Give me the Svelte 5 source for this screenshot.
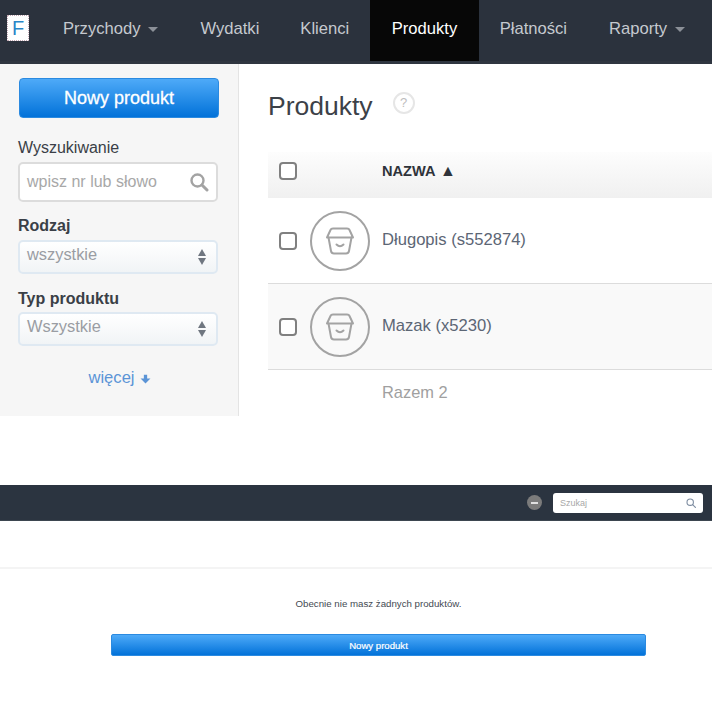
<script>
  const menu = [
    { label: 'Przychody', caret: true },
    { label: 'Wydatki' },
    { label: 'Klienci' },
    { label: 'Produkty', active: true },
    { label: 'Płatności' },
    { label: 'Raporty', caret: true }
  ];

  const products = [
    { name: 'Długopis (s552874)' },
    { name: 'Mazak (x5230)', shaded: true }
  ];
</script>

{#snippet bag()}
  <span class="thumb">
    <svg width="30" height="30" viewBox="0 0 30 30" fill="none" stroke="#a3a3a3" stroke-width="2" stroke-linejoin="round" stroke-linecap="round">
      <path d="M2 11.5 L5.5 4 Q6 2.5 8 2.5 H22 Q24 2.5 24.5 4 L28 11.5 Z" />
      <path d="M3.5 11.5 L6 25 Q6.5 27.5 9 27.5 H21 Q23.500 27.5 24 25 L26.5 11.5" />
      <path d="M11.5 18.5 Q15 22 18.5 18.5" />
    </svg>
  </span>
{/snippet}

{#snippet updown()}
  <span class="updown"><i class="up"></i><i class="down"></i></span>
{/snippet}

<div class="page">
  <section class="app">
    <nav class="topnav">
      <div class="logo"><span>F</span></div>
      <ul>
        {#each menu as item}
          <li class:active={item.active}>
            {item.label}
            {#if item.caret}<i class="caret"></i>{/if}
          </li>
        {/each}
      </ul>
    </nav>

    <div class="body">
      <aside class="sidebar">
        <button class="btn-new">Nowy produkt</button>

        <div class="label first">Wyszukiwanie</div>
        <div class="search">
          <span>wpisz nr lub słowo</span>
          <svg width="20" height="20" viewBox="0 0 20 20" fill="none" stroke="#a3a3a3">
            <circle cx="8.5" cy="8.5" r="6" stroke-width="2.4" />
            <path d="M13 13 L18 18" stroke-width="3" stroke-linecap="round" />
          </svg>
        </div>

        <div class="label strong">Rodzaj</div>
        <div class="select"><span>wszystkie</span>{@render updown()}</div>

        <div class="label strong second">Typ produktu</div>
        <div class="select"><span>Wszystkie</span>{@render updown()}</div>

        <a class="more" href="#more">więcej
          <svg width="11" height="11" viewBox="0 0 10 10" fill="#5b94d6"><path d="M3.5 1.5 H6.5 V5 H9.5 L5 9.5 L0.5 5 H3.5 Z" /></svg>
        </a>
      </aside>

      <main class="content">
        <div class="title">
          <h1>Produkty</h1>
          <span class="help">?</span>
        </div>

        <div class="row head">
          <span class="check"></span>
          <span class="name-head">NAZWA <b>▲</b></span>
        </div>
        {#each products as p}
          <div class="row item" class:shaded={p.shaded}>
            <span class="check"></span>
            {@render bag()}
            <span class="name">{p.name}</span>
          </div>
        {/each}
        <div class="total">Razem 2</div>
      </main>
    </div>
  </section>

  <section class="mobile">
    <header class="bar">
      <span class="dot"><i></i></span>
      <div class="mini-search">
        <span>Szukaj</span>
        <svg width="10" height="10" viewBox="0 0 10 10" fill="none" stroke="#7d8ca0" stroke-width="1.1">
          <circle cx="4.2" cy="4.2" r="3.2" />
          <path d="M6.6 6.6 L9.4 9.4" stroke-linecap="round" />
        </svg>
      </div>
    </header>
    <div class="strip"></div>
    <p class="empty">Obecnie nie masz żadnych produktów.</p>
    <button class="btn-wide">Nowy produkt</button>
  </section>
</div>

<style>
  :global(body) {
    margin: 0;
    background: #fff;
  }

  .page {
    width: 712px;
    height: 712px;
    overflow: hidden;
    font-family: "Liberation Sans", Arial, sans-serif;
    color: #333;
  }

  .app {
    height: 416px;
    display: flex;
    flex-direction: column;
    overflow: hidden;
  }

  .topnav {
    height: 64px;
    flex: none;
    box-sizing: border-box;
    background: #2b323d;
    border-bottom: 3px solid #2f3640;
    display: flex;
  }

  .logo {
    width: 41px;
    margin-left: 7px;
    flex: none;
    padding-top: 15px;
    box-sizing: border-box;
  }

  .logo span {
    display: block;
    width: 22px;
    height: 26px;
    box-sizing: border-box;
    background: #fff;
    border: 1px dotted #c4a9b4;
    color: #2a86c8;
    font-size: 20px;
    line-height: 25px;
    text-align: center;
  }

  .topnav ul {
    list-style: none;
    margin: 0 0 0 -7px;
    padding: 0;
    display: flex;
  }

  .topnav li {
    padding: 0 20.5px 3px;
    font-size: 16.6px;
    color: #c5c9cf;
    white-space: nowrap;
    display: flex;
    align-items: center;
    gap: 8px;
    height: 58px;
  }

  .topnav li:first-child {
    padding-left: 22px;
    padding-right: 21.5px;
  }

  .topnav li.active {
    background: #070707;
    color: #fff;
    padding-left: 22px;
    padding-right: 22px;
  }

  .topnav li.active + li {
    padding-right: 21.5px;
  }

  .caret {
    width: 0;
    height: 0;
    border-left: 5px solid transparent;
    border-right: 5px solid transparent;
    border-top: 5px solid #8b9098;
  }

  .body {
    flex: 1;
    display: flex;
    min-height: 0;
  }

  .sidebar {
    width: 239px;
    flex: none;
    box-sizing: border-box;
    background: #f6f6f6;
    border-right: 1px solid #e4e4e4;
    padding: 14px 20px 0 18px;
  }

  .btn-new,
  .btn-wide {
    display: block;
    background: linear-gradient(#4eaaf8, #0272d9);
    border: 1px solid #2b8ae0;
    color: #fff;
    font-family: inherit;
    cursor: pointer;
    padding: 0;
  }

  .btn-new {
    width: 200px;
    height: 40px;
    margin-left: 1px;
    border-radius: 4px;
    font-size: 18px;
    font-weight: normal;
    -webkit-text-stroke: 0.3px #fff;
  }

  .label {
    font-size: 16px;
    line-height: 18px;
    color: #3a3f47;
  }

  .label.first {
    margin-top: 21px;
  }

  .label.strong {
    font-weight: bold;
    margin-top: 15px;
  }

  .label.second {
    margin-top: 16px;
  }

  .search {
    margin-top: 5px;
    height: 40px;
    box-sizing: border-box;
    border: 2px solid #dcdcdc;
    border-radius: 5px;
    background: #fff;
    display: flex;
    align-items: center;
    justify-content: space-between;
    padding: 0 7px;
    font-size: 16px;
    color: #a8a8a8;
  }

  .select {
    margin-top: 5px;
    height: 34px;
    box-sizing: border-box;
    border: 2px solid #dfe9f2;
    border-radius: 5px;
    background: linear-gradient(#ffffff, #f1f4f6);
    display: flex;
    align-items: center;
    justify-content: space-between;
    padding: 0 7px 5px;
    font-size: 16.4px;
    color: #9a9da3;
  }

  .label.second + .select {
    margin-top: 4px;
  }

  .updown {
    display: flex;
    flex-direction: column;
    gap: 2px;
    margin-top: 5px;
    margin-right: 3px;
  }

  .updown i {
    width: 0;
    height: 0;
    border-left: 4.5px solid transparent;
    border-right: 4.5px solid transparent;
  }

  .updown .up {
    border-bottom: 7px solid #6f7680;
  }

  .updown .down {
    border-top: 7px solid #6f7680;
  }

  .more {
    display: flex;
    justify-content: center;
    align-items: center;
    gap: 5px;
    margin: 22px 0 0 3px;
    font-size: 16.6px;
    color: #5b94d6;
    text-decoration: none;
  }

  .content {
    flex: 1;
    min-width: 0;
    padding-left: 29px;
  }

  .title {
    display: flex;
    align-items: flex-start;
    gap: 20px;
    padding-top: 26px;
    height: 88px;
    box-sizing: border-box;
  }

  .title h1 {
    margin: 0;
    font-size: 26.5px;
    line-height: 32px;
    font-weight: normal;
    color: #3c4148;
  }

  .help {
    width: 22px;
    height: 22px;
    margin-top: 2px;
    box-sizing: border-box;
    border: 2px solid #e6e6e6;
    border-radius: 50%;
    background: #fff;
    color: #bdbdbd;
    font-size: 13px;
    line-height: 18px;
    text-align: center;
  }

  .row {
    display: flex;
    align-items: center;
    box-sizing: border-box;
    padding-left: 11px;
    border-bottom: 1px solid #dcdcdc;
  }

  .row.head {
    height: 46px;
    padding-bottom: 8px;
    background: linear-gradient(#fdfdfd, #f0f0f0);
    border-bottom: 0;
  }

  .row.item {
    height: 86px;
  }

  .row.shaded {
    background: #f9f9f9;
  }

  .check {
    width: 18px;
    height: 18px;
    flex: none;
    box-sizing: border-box;
    border: 2px solid #808080;
    border-radius: 4px;
    background: #fff;
  }

  .name-head {
    margin-left: 85px;
    font-size: 14.6px;
    font-weight: bold;
    color: #2f333a;
  }

  .name-head b {
    font-size: 16px;
    margin-left: 1px;
  }

  .thumb {
    width: 60px;
    height: 60px;
    margin-left: 13px;
    flex: none;
    box-sizing: border-box;
    border: 2px solid #a3a3a3;
    border-radius: 50%;
    display: flex;
    align-items: center;
    justify-content: center;
  }

  .name {
    margin-left: 12px;
    font-size: 16.6px;
    color: #5c6675;
    padding-bottom: 1px;
  }

  .total {
    padding: 13px 0 0 114px;
    font-size: 16.4px;
    color: #a0a0a0;
  }

  .mobile {
    margin-top: 69px;
    display: flex;
    flex-direction: column;
    align-items: stretch;
  }

  .bar {
    height: 36px;
    box-sizing: border-box;
    background: #2b3440;
    border-bottom: 1px solid #3d4650;
    display: flex;
    align-items: center;
    justify-content: flex-end;
    padding: 0 9px 0 0;
    gap: 11px;
  }

  .dot {
    width: 15px;
    height: 15px;
    border-radius: 50%;
    background: #7b7b7b;
    display: flex;
    align-items: center;
    justify-content: center;
  }

  .dot i {
    width: 7px;
    height: 2px;
    background: #e0e0e0;
  }

  .mini-search {
    width: 150px;
    height: 20px;
    box-sizing: border-box;
    background: #fff;
    border-radius: 3px;
    display: flex;
    align-items: center;
    justify-content: space-between;
    padding: 0 7px;
    font-size: 9px;
    color: #a8a8a8;
  }

  .strip {
    height: 46px;
    border-bottom: 2px solid #f4f4f4;
  }

  .empty {
    margin: 29px 0 0 45px;
    text-align: center;
    font-size: 9.7px;
    line-height: 12px;
    color: #444a52;
  }

  .btn-wide {
    width: 535px;
    height: 22px;
    margin: 24px 0 0 111px;
    border-radius: 2px;
    font-size: 9.6px;
    font-weight: normal;
    -webkit-text-stroke: 0.2px #fff;
  }
</style>
